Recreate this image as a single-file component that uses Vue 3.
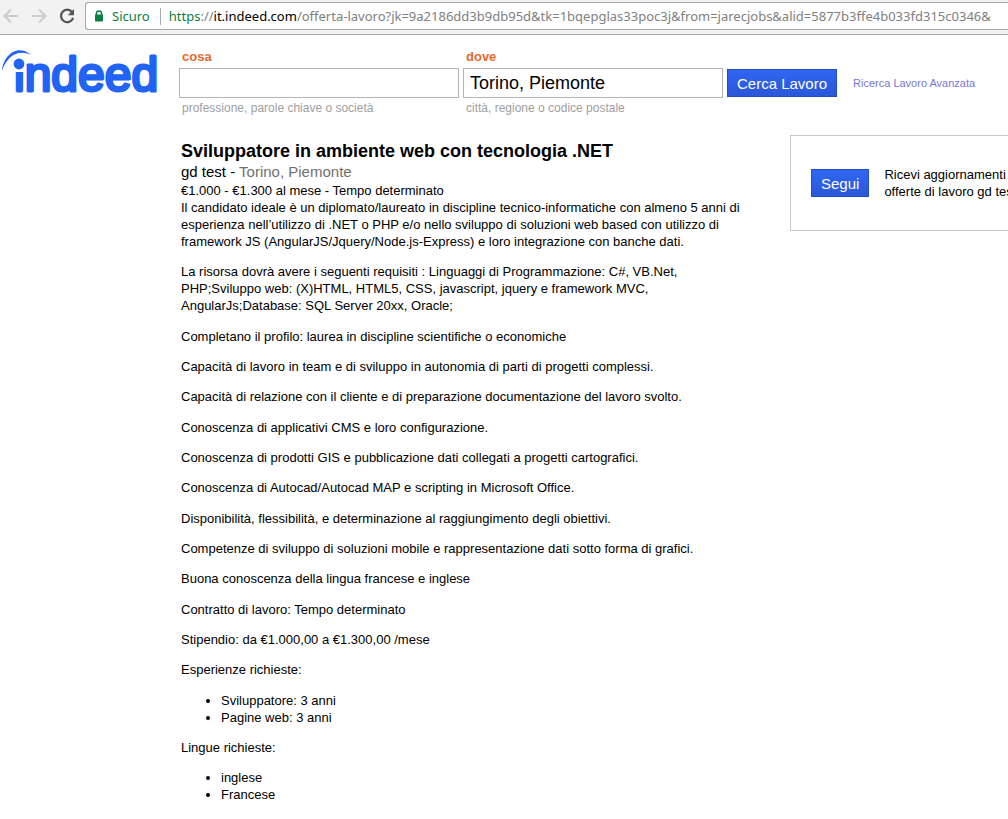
<script setup>
import { ref } from 'vue'

const what = ref('')
const where = ref('Torino, Piemonte')

const paragraphs = [
  'La risorsa dovrà avere i seguenti requisiti : Linguaggi di Programmazione: C#, VB.Net, PHP;Sviluppo web: (X)HTML, HTML5, CSS, javascript, jquery e framework MVC, AngularJs;Database: SQL Server 20xx, Oracle;',
  'Completano il profilo: laurea in discipline scientifiche o economiche',
  'Capacità di lavoro in team e di sviluppo in autonomia di parti di progetti complessi.',
  'Capacità di relazione con il cliente e di preparazione documentazione del lavoro svolto.',
  'Conoscenza di applicativi CMS e loro configurazione.',
  'Conoscenza di prodotti GIS e pubblicazione dati collegati a progetti cartografici.',
  'Conoscenza di Autocad/Autocad MAP e scripting in Microsoft Office.',
  'Disponibilità, flessibilità, e determinazione al raggiungimento degli obiettivi.',
  'Competenze di sviluppo di soluzioni mobile e rappresentazione dati sotto forma di grafici.',
  'Buona conoscenza della lingua francese e inglese',
  'Contratto di lavoro: Tempo determinato',
  'Stipendio: da €1.000,00 a €1.300,00 /mese',
  'Esperienze richieste:'
]
const experience = ['Sviluppatore: 3 anni', 'Pagine web: 3 anni']
const languages = ['inglese', 'Francese']
</script>

<template>
  <div class="page">
    <div class="toolbar">
      <button class="nav" type="button" aria-label="Indietro">
        <svg width="16" height="16" viewBox="0 0 16 16" fill="none" stroke="#cbcbcb" stroke-width="2"><path d="M15 8H2M8 1.5L1.5 8L8 14.5" /></svg>
      </button>
      <button class="nav" type="button" aria-label="Avanti">
        <svg width="16" height="16" viewBox="0 0 16 16" fill="none" stroke="#cbcbcb" stroke-width="2"><path d="M1 8H14M8 1.5L14.5 8L8 14.5" /></svg>
      </button>
      <button class="nav" type="button" aria-label="Ricarica">
        <svg width="16" height="16" viewBox="0 0 16 16"><path d="M13 4A6.2 6.2 0 1 0 14.1 9.8" fill="none" stroke="#555" stroke-width="2.2" /><path d="M15 1V7.2H8.8Z" fill="#555" /></svg>
      </button>
      <div class="omnibox">
        <svg class="lock" width="10" height="12" viewBox="0 0 10 12"><path d="M2.4 5V3.6a2.6 2.6 0 0 1 5.2 0V5" fill="none" stroke="#0b8043" stroke-width="1.5" /><rect x="1" y="4.6" width="8" height="7" rx="0.8" fill="#0b8043" /></svg>
        <span class="secure">Sicuro</span>
        <span class="url"><span class="scheme">https</span>://<span class="host">it.indeed.com</span>/offerta-lavoro?jk=9a2186dd3b9db95d&amp;tk=1bqepglas33poc3j&amp;from=jarecjobs&amp;alid=5877b3ffe4b033fd315c0346&amp;</span>
      </div>
    </div>

    <header class="header">
      <a class="logo" href="#" aria-label="indeed">
        <svg width="170" height="60" viewBox="0 0 170 60">
          <text class="wordmark" x="14" y="43">indeed</text>
          <rect x="14" y="4" width="11" height="20" fill="#fff" />
          <circle cx="19" cy="16" r="5.4" fill="#2164f3" />
          <path d="M2 23C3 8 17-5 31 7C18 1 7 8 2 23Z" fill="#2164f3" />
        </svg>
      </a>
      <form class="search" @submit.prevent>
        <div class="field what">
          <label for="what">cosa</label>
          <input id="what" v-model="what" type="text">
          <span class="hint">professione, parole chiave o società</span>
        </div>
        <div class="field where">
          <label for="where">dove</label>
          <input id="where" v-model="where" type="text">
          <span class="hint">città, regione o codice postale</span>
        </div>
        <button class="blue find" type="submit">Cerca Lavoro</button>
        <a class="advanced" href="#">Ricerca Lavoro Avanzata</a>
      </form>
    </header>

    <main class="content">
      <article class="job">
        <h1>Sviluppatore in ambiente web con tecnologia .NET</h1>
        <div class="company">gd test - <span class="place">Torino, Piemonte</span></div>
        <div>€1.000 - €1.300 al mese - Tempo determinato</div>
        <div>Il candidato ideale è un diplomato/laureato in discipline tecnico-informatiche con almeno 5 anni di esperienza nell’utilizzo di .NET o PHP e/o nello sviluppo di soluzioni web based con utilizzo di framework JS (AngularJS/Jquery/Node.js-Express) e loro integrazione con banche dati.</div>
        <p v-for="text in paragraphs" :key="text">{{ text }}</p>
        <ul>
          <li v-for="item in experience" :key="item">{{ item }}</li>
        </ul>
        <p>Lingue richieste:</p>
        <ul class="languages">
          <li v-for="item in languages" :key="item">{{ item }}</li>
        </ul>
      </article>
      <aside class="follow">
        <button class="blue" type="button">Segui</button>
        <div class="note">Ricevi aggiornamenti<br>offerte di lavoro gd test</div>
      </aside>
    </main>
  </div>
</template>

<style>
body {
  margin: 0;
  background: #fff;
}
</style>

<style scoped>
.page {
  overflow: hidden;
  color: #000;
  font-family: "Liberation Sans", Arial, sans-serif;
  font-size: 13px;
  line-height: 17px;
}
.toolbar {
  display: flex;
  align-items: center;
  gap: 12px;
  height: 32px;
  padding-left: 3px;
  border-bottom: 1px solid #a9a9a9;
  padding-bottom: 2px;
  background: #f2f2f2;
}
.nav {
  display: flex;
  flex: none;
  padding: 0;
  border: 0;
  background: none;
}
.omnibox {
  display: flex;
  flex: 1;
  align-items: center;
  box-sizing: border-box;
  min-width: 0;
  height: 28px;
  margin-left: -2px;
  padding-left: 8px;
  overflow: hidden;
  border: 1px solid #a9a9a9;
  border-right: 0;
  border-radius: 3px 0 0 3px;
  background: #fff;
  color: #808080;
  font-family: "Noto Sans", "Open Sans", sans-serif;
  font-size: 13px;
  white-space: nowrap;
}
.lock {
  flex: none;
}
.secure {
  margin: 0 8px;
  padding-right: 10px;
  border-right: 1px solid #a9a9a9;
  color: #0b8043;
}
.scheme {
  color: #0b8043;
}
.host {
  color: #000;
}
.header {
  display: flex;
  align-items: flex-start;
  padding-top: 13px;
}
.logo {
  flex: none;
  width: 179px;
}
.logo svg {
  display: block;
}
.wordmark {
  fill: #2164f3;
  stroke: #2164f3;
  stroke-width: 3;
  stroke-linejoin: round;
  font-family: "Liberation Sans", Arial, sans-serif;
  font-size: 48px;
}
.search {
  display: flex;
  align-items: flex-start;
  gap: 4px;
}
.field {
  display: flex;
  flex-direction: column;
}
.what {
  width: 280px;
}
.where {
  width: 260px;
}
.field label {
  padding-left: 3px;
  color: #e8692d;
  font-weight: bold;
}
.field input {
  box-sizing: border-box;
  width: 100%;
  height: 30px;
  margin: 3px 0 2px;
  padding: 0 6px;
  border: 1px solid #b5b5b5;
  outline: 0;
  background: #fff;
  color: #000;
  font: 18px "Liberation Sans", Arial, sans-serif;
}
.hint {
  padding-left: 3px;
  color: #a0a0a0;
  font-size: 12px;
}
.blue {
  flex: none;
  height: 28px;
  padding: 0 9px;
  border: 1px solid #1f4fc4;
  background: linear-gradient(#3066f2, #2b57d8);
  color: #fff;
  font: 15px "Liberation Sans", Arial, sans-serif;
}
.find {
  margin-top: 21px;
}
.advanced {
  flex: none;
  margin: 27px 0 0 12px;
  color: #7777cc;
  font-size: 11px;
  text-decoration: none;
}
.content {
  display: flex;
  align-items: flex-start;
  padding: 18px 0 12px 181px;
}
.job {
  flex: none;
  width: 579px;
}
h1 {
  margin: 6px 0 2px;
  font-size: 18px;
  line-height: 20px;
}
.company {
  font-size: 15px;
  line-height: 18px;
  padding-bottom: 1px;
}
.place {
  color: #707070;
}
p,
ul {
  margin: 13px 0;
}
p + p:nth-of-type(3n + 2),
p + ul {
  margin-top: 14px;
}
p + .languages {
  margin-top: 13px;
}
ul {
  padding-left: 40px;
}
.follow {
  display: flex;
  flex: none;
  align-items: center;
  gap: 15px;
  box-sizing: border-box;
  width: 300px;
  height: 96px;
  margin-left: 30px;
  padding: 0 20px;
  border: 1px solid #c8c8c8;
}
.note {
  white-space: nowrap;
}
</style>
